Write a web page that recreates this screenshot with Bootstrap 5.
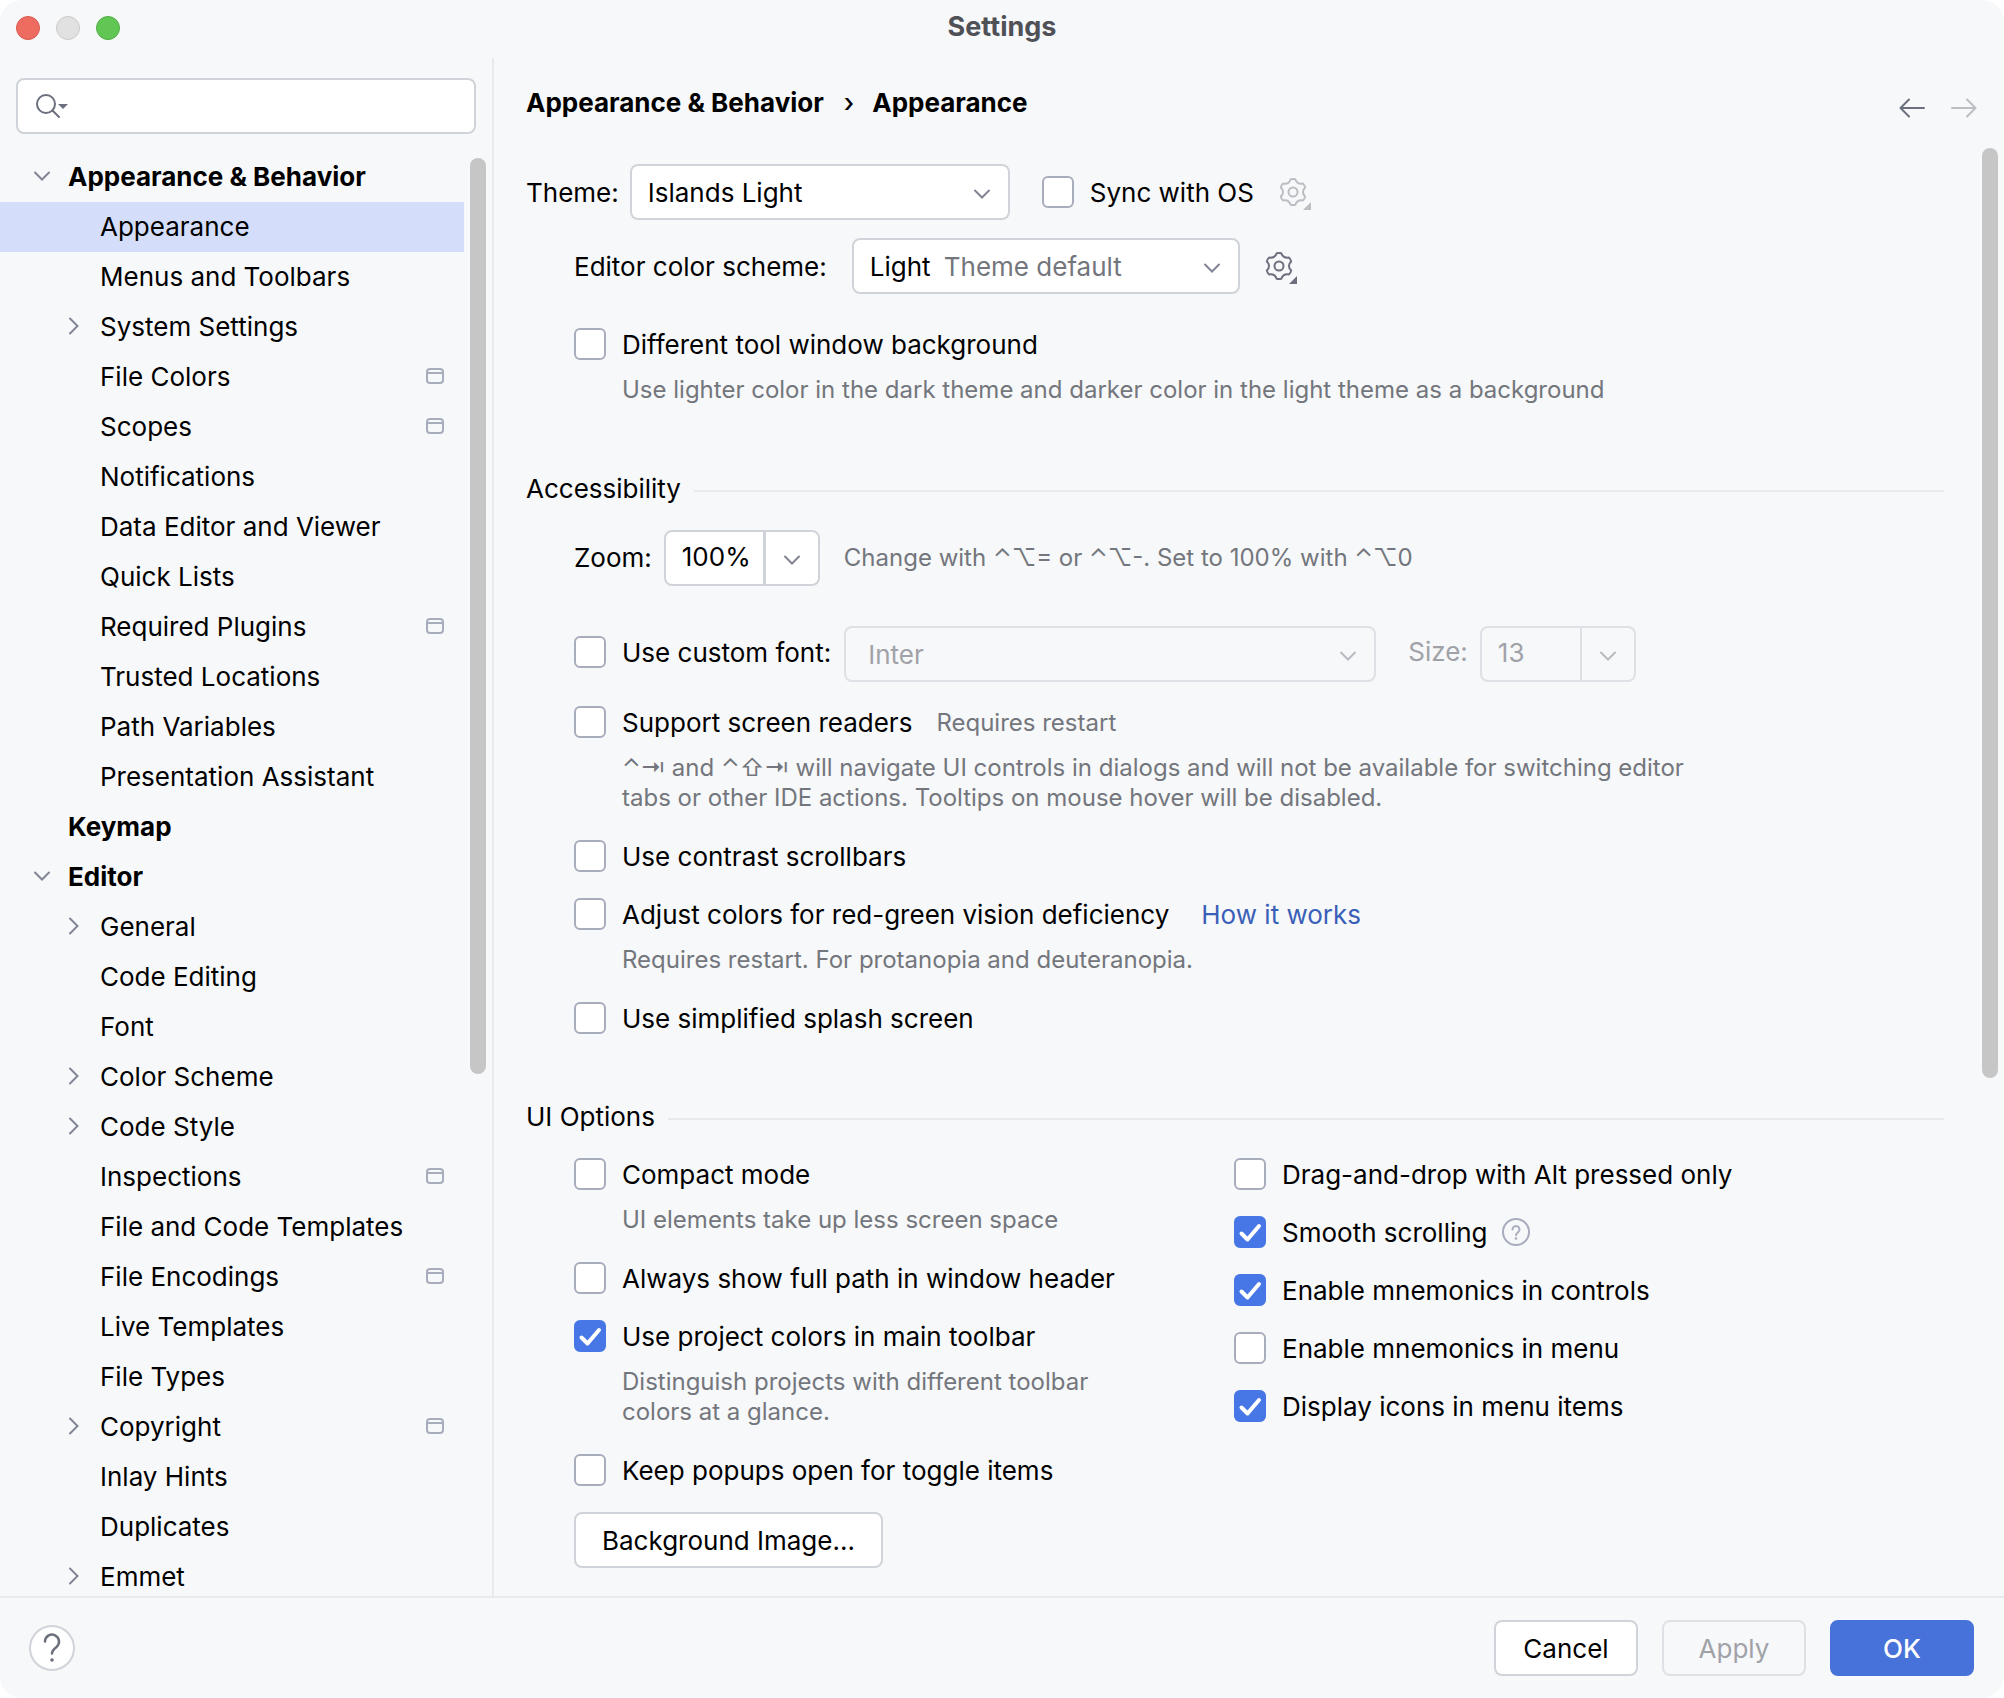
<!DOCTYPE html>
<html lang="en">
<head>
<meta charset="utf-8">
<meta name="viewport" content="width=device-width, initial-scale=1">
<title>Settings</title>
<link href="https://cdn.jsdelivr.net/npm/bootstrap@5.3.0/dist/css/bootstrap.min.css" rel="stylesheet">
<style>
  :root { --ink: #000; --soft: #73767c; --dim: #a0a2a8; --line: #e9eaee; --edge: #d1d3da; --edge-dim: #dfe0e5; --icon: #6c707e; --icon-dim: #bcbec4; --panel: #f7f8fa; --blue: #4772d9; }
  body { background: #fff; color: var(--ink); font-family: Inter, "Liberation Sans", "DejaVu Sans", sans-serif; font-size: 26px; line-height: 32px; }
  .window { background: var(--panel); border-radius: 22px; }
  .titlebar { height: 58px; padding: 0 16px; color: #4f5157; font-size: 27px; }
  .titlebar .side { flex: 1 1 0; height: 56px; }
  .light { width: 24px; height: 24px; border-radius: 50%; border: 1px solid; padding: 0; }
  .light-close { background: #ed6b5f; border-color: #d85a4e; }
  .light-min { background: #e1e1e1; border-color: #c9c9c9; }
  .light-max { background: #61c654; border-color: #50ae42; }
  svg { display: block; flex: none; }

  /* Sidebar */
  .sidebar { width: 494px; flex: none; border-right: 2px solid var(--line); }
  .search { margin: 20px 16px 18px; height: 56px; padding: 0 18px; background: #fff; border: 2px solid var(--edge); border-radius: 8px; }
  .search input { font-size: 26px; color: var(--ink); }
  .tree { width: 464px; flex: none; }
  .tree a { height: 50px; padding: 0 20px 0 100px; color: var(--ink); text-decoration: none; white-space: nowrap; }
  .tree a svg { margin-bottom: 2px; }
  .tree a.top { padding-left: 68px; font-weight: 700; }
  .tree a.active { background: #d4defa; }
  .tree a.parent { padding-left: 60px; }
  .tree a.parent svg:first-child { margin-right: 12px; }
  .tree a.top.parent { padding-left: 28px; }
  .thumb { width: 16px; border-radius: 8px; background: #c6c6c6; }
  .track-side { padding: 6px 0 0 6px; }
  .track-side .thumb { height: 63.7%; }
  .track-main { padding-right: 6px; }
  .track-main .thumb { height: 64.2%; }

  /* Content */
  .content { min-width: 0; }
  .crumbs { height: 90px; padding: 0 26px 0 32px; font-weight: 700; }
  .crumbs .breadcrumb-item + .breadcrumb-item { padding-left: 20px; }
  .crumbs .breadcrumb-item + .breadcrumb-item::before { content: "›"; color: var(--ink); padding-right: 18px; font-weight: 500; }
  .history { padding-top: 10px; }
  .pane { padding: 16px 38px 0 32px; }
  .indent { padding-left: 48px; }
  .icon-btn { border: 0; background: none; padding: 0; line-height: 0; color: var(--icon); }
  .icon-btn:disabled { color: var(--icon-dim); }
  .gear-btn { margin-left: 21px; }
  .field-label { margin-right: 11px; }
  .row-scheme { margin-top: 18px; }
  .row-scheme > label { margin-right: 25px; }
  .row-bg { margin-top: 34px; }

  .form-select, .form-control, .combo .btn { height: 56px; font-size: 26px; line-height: 32px; border: 2px solid var(--edge); border-radius: 8px; color: var(--ink); background-color: #fff; }
  .form-select { padding: 10px 48px 8px 16px; background-size: 32px 32px; background-position: right 10px center;
    background-image: url("data:image/svg+xml,%3csvg xmlns='http://www.w3.org/2000/svg' viewBox='0 0 32 32'%3e%3cpath d='M9 14.500l7 7 7-7' fill='none' stroke='%23818594' stroke-width='2' stroke-linecap='round'/%3e%3c/svg%3e"); }
  .form-select:disabled, .form-control:disabled, .combo .btn:disabled { background-color: transparent; border-color: var(--edge-dim); color: var(--dim); opacity: 1; }
  .form-select:disabled { padding-left: 22px; background-image: url("data:image/svg+xml,%3csvg xmlns='http://www.w3.org/2000/svg' viewBox='0 0 32 32'%3e%3cpath d='M9 14.500l7 7 7-7' fill='none' stroke='%23b9bbc2' stroke-width='2' stroke-linecap='round'/%3e%3c/svg%3e"); }
  .w-theme { width: 380px; }
  .w-scheme { width: 388px; }
  .w-font { width: 532px; margin: 0 32px 0 13px; }
  .scheme-note { left: 92px; top: 13px; color: var(--soft); pointer-events: none; }
  .combo { width: 156px; flex: none; flex-wrap: nowrap; }
  .combo .form-control { padding: 8px 0 10px 16px; }
  .combo.input-group .btn { width: 56px; margin-left: -2px; padding: 0 0 0 12px; color: #818594; }
  .combo.input-group .form-control:disabled { border-right: 0; }
  .combo.input-group .btn:disabled { margin-left: 0; color: #b9bbc2; }
  .size-label { color: var(--dim); }

  .check { min-height: 32px; }
  .check label, .check .how, .check .note, .row-scheme > label { line-height: 30px; padding-top: 2px; }
  .check .form-check-input { width: 32px; height: 32px; margin: 0 16px 0 0; flex: none; border: 2px solid #a8adbd; border-radius: 6px; background-color: #fff; background-size: 32px 32px; background-position: center; }
  .check .form-check-input:checked { background-color: #4776e6; border-color: #4776e6;
    background-image: url("data:image/svg+xml,%3csvg xmlns='http://www.w3.org/2000/svg' viewBox='0 0 32 32'%3e%3cpath d='M7.500 17.500l6 6L25 10' fill='none' stroke='%23fff' stroke-width='4' stroke-linecap='round' stroke-linejoin='round'/%3e%3c/svg%3e"); }
  .note { font-size: 24px; line-height: 30px; color: var(--soft); }
  .under { margin: -11px 0 1px; padding-left: 48px; }
  .stack { gap: 26px; }
  .tip { margin-left: 14px; }
  .section-title { gap: 13px; margin-top: 67px; }
  .section-title hr { margin: 4px 0 0; border-top: 2px solid var(--line); opacity: 1; }
  .section-body { padding-top: 25px; }
  .left-col { width: 660px; flex: none; }
  .how { color: #3a5fb8; text-decoration: none; }

  .act { height: 56px; min-width: 144px; padding: 2px 26px 0; font-size: 26px; line-height: 32px; border: 2px solid var(--edge); border-radius: 8px; background: #fff; color: var(--ink); }
  .act:disabled { background: transparent; border-color: var(--edge-dim); color: var(--dim); opacity: 1; }
  .act-main { background: var(--blue); border-color: var(--blue); color: #fff; font-weight: 500; }
  .footer-bar { height: 102px; padding: 0 30px 0 29px; border-top: 2px solid var(--line); flex: none; }
  .help { width: 46px; height: 46px; border: 2px solid var(--edge); border-radius: 50%; background: #fff; padding: 0; }
</style>
<script src="https://cdn.jsdelivr.net/npm/bootstrap@5.3.0/dist/js/bootstrap.bundle.min.js"></script>
</head>
<body>
<svg width="0" height="0" class="position-absolute" aria-hidden="true">
  <defs>
    <symbol id="down" viewBox="0 0 28 28"><path d="M7 10.500l7 7 7-7" fill="none" stroke="#818594" stroke-width="2" stroke-linecap="round"/></symbol>
    <symbol id="right" viewBox="0 0 28 28"><path d="M10 6.500l7.500 7.500-7.500 7.500" fill="none" stroke="#818594" stroke-width="2" stroke-linecap="round"/></symbol>
    <symbol id="proj" viewBox="0 0 18 16"><rect x="1" y="1" width="16" height="14" rx="3" fill="none" stroke="#a8adbd" stroke-width="2"/><path d="M1 5h16" stroke="#a8adbd" stroke-width="2"/></symbol>
    <symbol id="gear" viewBox="0 0 36 36"><g transform="translate(18 18)" fill="none" stroke="currentColor" stroke-width="2" stroke-linejoin="round"><path d="M-2.300-12.800Q0-13.400 2.300-12.800C3.400-9.500 5.200-7.600 10-8.400Q11.700-6.700 12.200-4.400C9.200-1.800 9.200 1.800 12.200 4.400Q11.700 6.700 10 8.400C5.200 7.600 3.400 9.500 2.300 12.800Q0 13.400-2.300 12.800C-3.400 9.500-5.200 7.600-10 8.400Q-11.700 6.700-12.200 4.400C-9.200 1.800-9.200-1.800-12.200-4.400Q-11.700-6.700-10-8.400C-5.200-7.600-3.400-9.500-2.300-12.800Z"/><circle r="4.500"/></g><path d="M36 28v8h-8z" fill="currentColor"/></symbol>
  </defs>
</svg>
<div class="window d-flex flex-column vh-100 overflow-hidden">
  <header class="titlebar d-flex">
    <div class="side d-flex align-items-center gap-3">
      <button class="light light-close" aria-label="Close"></button>
      <button class="light light-min" aria-label="Minimize"></button>
      <button class="light light-max" aria-label="Zoom"></button>
    </div>
    <div class="fw-bold d-flex align-items-center pb-1">Settings</div>
    <div class="side"></div>
  </header>

  <div class="d-flex flex-grow-1 overflow-hidden">
    <aside class="sidebar d-flex flex-column">
      <label class="search d-flex align-items-center">
        <svg width="34" height="28" viewBox="0 0 34 28"><g fill="none" stroke="#6c707e" stroke-width="2" stroke-linecap="round"><circle cx="10" cy="12" r="9"/><path d="M16.500 18.500l6.500 6.500"/></g><path d="M22 12h10l-5 5z" fill="#6c707e"/></svg>
        <input type="search" class="border-0 bg-transparent flex-grow-1 ms-2" aria-label="Search settings">
      </label>
      <div class="d-flex flex-grow-1 overflow-hidden">
        <nav class="tree" aria-label="Settings groups">
          <a href="#" class="d-flex align-items-center top parent"><svg width="28" height="28"><use href="#down"/></svg>Appearance &amp; Behavior</a>
          <a href="#" class="d-flex align-items-center active">Appearance</a>
          <a href="#" class="d-flex align-items-center">Menus and Toolbars</a>
          <a href="#" class="d-flex align-items-center parent"><svg width="28" height="28"><use href="#right"/></svg>System Settings</a>
          <a href="#" class="d-flex align-items-center">File Colors<svg class="ms-auto" width="18" height="16"><use href="#proj"/></svg></a>
          <a href="#" class="d-flex align-items-center">Scopes<svg class="ms-auto" width="18" height="16"><use href="#proj"/></svg></a>
          <a href="#" class="d-flex align-items-center">Notifications</a>
          <a href="#" class="d-flex align-items-center">Data Editor and Viewer</a>
          <a href="#" class="d-flex align-items-center">Quick Lists</a>
          <a href="#" class="d-flex align-items-center">Required Plugins<svg class="ms-auto" width="18" height="16"><use href="#proj"/></svg></a>
          <a href="#" class="d-flex align-items-center">Trusted Locations</a>
          <a href="#" class="d-flex align-items-center">Path Variables</a>
          <a href="#" class="d-flex align-items-center">Presentation Assistant</a>
          <a href="#" class="d-flex align-items-center top">Keymap</a>
          <a href="#" class="d-flex align-items-center top parent"><svg width="28" height="28"><use href="#down"/></svg>Editor</a>
          <a href="#" class="d-flex align-items-center parent"><svg width="28" height="28"><use href="#right"/></svg>General</a>
          <a href="#" class="d-flex align-items-center">Code Editing</a>
          <a href="#" class="d-flex align-items-center">Font</a>
          <a href="#" class="d-flex align-items-center parent"><svg width="28" height="28"><use href="#right"/></svg>Color Scheme</a>
          <a href="#" class="d-flex align-items-center parent"><svg width="28" height="28"><use href="#right"/></svg>Code Style</a>
          <a href="#" class="d-flex align-items-center">Inspections<svg class="ms-auto" width="18" height="16"><use href="#proj"/></svg></a>
          <a href="#" class="d-flex align-items-center">File and Code Templates</a>
          <a href="#" class="d-flex align-items-center">File Encodings<svg class="ms-auto" width="18" height="16"><use href="#proj"/></svg></a>
          <a href="#" class="d-flex align-items-center">Live Templates</a>
          <a href="#" class="d-flex align-items-center">File Types</a>
          <a href="#" class="d-flex align-items-center parent"><svg width="28" height="28"><use href="#right"/></svg>Copyright<svg class="ms-auto" width="18" height="16"><use href="#proj"/></svg></a>
          <a href="#" class="d-flex align-items-center">Inlay Hints</a>
          <a href="#" class="d-flex align-items-center">Duplicates</a>
          <a href="#" class="d-flex align-items-center parent"><svg width="28" height="28"><use href="#right"/></svg>Emmet</a>
        </nav>
        <div class="track-side"><div class="thumb"></div></div>
      </div>
    </aside>

    <main class="content d-flex flex-column flex-grow-1">
      <div class="crumbs d-flex align-items-center justify-content-between flex-shrink-0">
        <ol class="breadcrumb m-0">
          <li class="breadcrumb-item">Appearance &amp; Behavior</li>
          <li class="breadcrumb-item">Appearance</li>
        </ol>
        <div class="history d-flex">
          <button class="icon-btn me-4" aria-label="Back"><svg width="28" height="24" viewBox="0 0 28 24"><path d="M26 12H3M11 3.500L2.500 12l8.500 8.500" fill="none" stroke="currentColor" stroke-width="2" stroke-linecap="round" stroke-linejoin="round"/></svg></button>
          <button class="icon-btn" disabled aria-label="Forward"><svg width="28" height="24" viewBox="0 0 28 24"><path d="M2 12h23M17 3.500l8.500 8.500-8.500 8.500" fill="none" stroke="currentColor" stroke-width="2" stroke-linecap="round" stroke-linejoin="round"/></svg></button>
        </div>
      </div>

      <div class="d-flex flex-grow-1 overflow-hidden">
        <div class="pane flex-grow-1">
          <div class="check d-flex align-items-center">
            <label for="theme" class="field-label">Theme:</label>
            <select id="theme" class="form-select w-theme"><option>Islands Light</option></select>
            <div class="check d-flex align-items-center ms-4 ps-2">
              <input class="form-check-input" type="checkbox" id="sync"><label for="sync">Sync with OS</label>
            </div>
            <button class="icon-btn gear-btn" disabled aria-label="Sync options"><svg width="36" height="36"><use href="#gear"/></svg></button>
          </div>
          <div class="row-scheme indent d-flex align-items-center">
            <label for="scheme">Editor color scheme:</label>
            <div class="position-relative">
              <select id="scheme" class="form-select w-scheme"><option>Light</option></select>
              <span class="scheme-note position-absolute">Theme default</span>
            </div>
            <button class="icon-btn gear-btn" aria-label="Scheme options"><svg width="36" height="36"><use href="#gear"/></svg></button>
          </div>
          <div class="row-bg indent d-flex flex-column stack">
            <div class="check d-flex align-items-center"><input class="form-check-input" type="checkbox" id="toolbg"><label for="toolbg">Different tool window background</label></div>
            <div class="note under">Use lighter color in the dark theme and darker color in the light theme as a background</div>
          </div>

          <div class="section-title d-flex align-items-center">Accessibility<hr class="flex-grow-1"></div>
          <div class="section-body indent">
            <div class="d-flex align-items-center mb-4 pb-3">
              <label for="zoom" class="me-2 pe-1">Zoom:</label>
              <div class="combo input-group">
                <input id="zoom" type="text" class="form-control" value="100%"><button class="btn" aria-label="Zoom values"><svg width="28" height="28" viewBox="0 0 28 28"><path d="M7 12.500l7 7 7-7" fill="none" stroke="currentColor" stroke-width="2" stroke-linecap="round"/></svg></button>
              </div>
              <span class="note ms-4">Change with ⌃⌥= or ⌃⌥-. Set to 100% with ⌃⌥0</span>
            </div>
            <div class="d-flex align-items-center mb-4">
              <div class="check d-flex align-items-center mb-1"><input class="form-check-input" type="checkbox" id="cfont"><label for="cfont">Use custom font:</label></div>
              <select class="form-select w-font" aria-label="Font" disabled><option>Inter</option></select>
              <label for="fsize" class="size-label me-2 pe-1 pb-1">Size:</label>
              <div class="combo input-group">
                <input id="fsize" type="text" class="form-control" value="13" disabled><button class="btn" disabled aria-label="Size values"><svg width="28" height="28" viewBox="0 0 28 28"><path d="M7 12.500l7 7 7-7" fill="none" stroke="currentColor" stroke-width="2" stroke-linecap="round"/></svg></button>
              </div>
            </div>
            <div class="d-flex flex-column stack">
              <div class="check d-flex align-items-center"><input class="form-check-input" type="checkbox" id="readers"><label for="readers">Support screen readers</label><span class="note ms-4">Requires restart</span></div>
              <div class="note under">⌃⇥ and ⌃⇧⇥ will navigate UI controls in dialogs and will not be available for switching editor<br>tabs or other IDE actions. Tooltips on mouse hover will be disabled.</div>
              <div class="check d-flex align-items-center"><input class="form-check-input" type="checkbox" id="contrast"><label for="contrast">Use contrast scrollbars</label></div>
              <div class="check d-flex align-items-center"><input class="form-check-input" type="checkbox" id="vision"><label for="vision">Adjust colors for red-green vision deficiency</label><a href="#" class="how ms-4 ps-2">How it works</a></div>
              <div class="note under">Requires restart. For protanopia and deuteranopia.</div>
              <div class="check d-flex align-items-center"><input class="form-check-input" type="checkbox" id="splash"><label for="splash">Use simplified splash screen</label></div>
            </div>
          </div>

          <div class="section-title d-flex align-items-center">UI Options<hr class="flex-grow-1"></div>
          <div class="section-body indent d-flex align-items-start">
            <div class="left-col d-flex flex-column stack">
              <div class="check d-flex align-items-center"><input class="form-check-input" type="checkbox" id="compact"><label for="compact">Compact mode</label></div>
              <div class="note under">UI elements take up less screen space</div>
              <div class="check d-flex align-items-center"><input class="form-check-input" type="checkbox" id="fullpath"><label for="fullpath">Always show full path in window header</label></div>
              <div class="check d-flex align-items-center"><input class="form-check-input" type="checkbox" id="projcolors" checked><label for="projcolors">Use project colors in main toolbar</label></div>
              <div class="note under">Distinguish projects with different toolbar<br>colors at a glance.</div>
              <div class="check d-flex align-items-center"><input class="form-check-input" type="checkbox" id="popups"><label for="popups">Keep popups open for toggle items</label></div>
              <button class="act btn align-self-start">Background Image...</button>
            </div>
            <div class="d-flex flex-column stack">
              <div class="check d-flex align-items-center"><input class="form-check-input" type="checkbox" id="dnd"><label for="dnd">Drag-and-drop with Alt pressed only</label></div>
              <div class="check d-flex align-items-center"><input class="form-check-input" type="checkbox" id="smooth" checked><label for="smooth">Smooth scrolling</label><svg class="tip" width="28" height="28" viewBox="0 0 28 28" role="img" aria-label="Help"><circle cx="14" cy="14" r="13" fill="none" stroke="#a8adbd" stroke-width="2"/><path d="M10.500 11.500a3.500 3.500 0 1 1 5.600 2.800c-1.300 1-2.100 1.600-2.100 3" fill="none" stroke="#a8adbd" stroke-width="2" stroke-linecap="round"/><circle cx="14" cy="20.500" r="1.300" fill="#a8adbd"/></svg></div>
              <div class="check d-flex align-items-center"><input class="form-check-input" type="checkbox" id="mnctl" checked><label for="mnctl">Enable mnemonics in controls</label></div>
              <div class="check d-flex align-items-center"><input class="form-check-input" type="checkbox" id="mnmenu"><label for="mnmenu">Enable mnemonics in menu</label></div>
              <div class="check d-flex align-items-center"><input class="form-check-input" type="checkbox" id="icons" checked><label for="icons">Display icons in menu items</label></div>
            </div>
          </div>
        </div>
        <div class="track-main"><div class="thumb"></div></div>
      </div>
    </main>
  </div>

  <footer class="footer-bar d-flex align-items-center">
    <button class="help d-flex align-items-center justify-content-center me-auto" aria-label="Help"><svg width="28" height="34" viewBox="0 0 28 34"><path d="M7 10.500a7 7 0 1 1 11.500 5.500c-2.600 2-4.500 3.500-4.500 6.500" fill="none" stroke="#6c707e" stroke-width="2.500" stroke-linecap="round"/><circle cx="14" cy="29" r="1.800" fill="#6c707e"/></svg></button>
    <div class="d-flex gap-4">
      <button class="act btn">Cancel</button>
      <button class="act btn" disabled>Apply</button>
      <button class="act act-main btn">OK</button>
    </div>
  </footer>
</div>
</body>
</html>
